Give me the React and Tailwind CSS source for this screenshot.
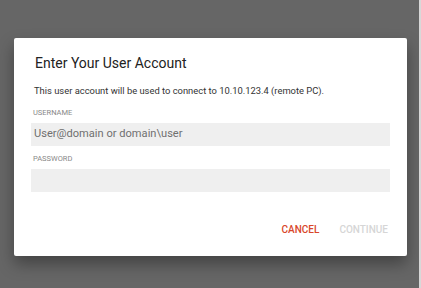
export default function App() {
  return (
    <div className="flex h-[288px] w-[421px] overflow-hidden bg-[#666666] font-['Roboto',sans-serif]">
      <div className="flex flex-1 items-start pl-[14px] pr-[12px] pt-[38px]">
        {/* Dialog */}
        <div className="w-full rounded-[2px] bg-white px-[17px] pb-[19px] pt-[16px] shadow-[0_8px_16px_rgba(0,0,0,0.35)]">
          <h2 className="pl-[4px] text-[14px] leading-[18px] text-[#222222]">Enter Your User Account</h2>
          <p className="mt-[12px] pl-[3px] text-[9.4px] leading-[13px] text-[#333333]">
            This user account will be used to connect to 10.10.123.4 (remote PC).
          </p>
          <label className="mt-[9.5px] block pl-[2px] text-[7.5px] leading-[12px] text-[#888888]">USERNAME</label>
          <div className="mt-[4.5px] flex h-[23px] items-center bg-[#efefef] px-[3px] text-[11.1px] text-[#707070]">
            User@domain or domain\user
          </div>
          <label className="mt-[7px] block pl-[2px] text-[7.5px] leading-[12px] text-[#888888]">PASSWORD</label>
          <div className="mt-[4px] h-[23px] bg-[#efefef]" />
          <div className="mt-[31px] flex justify-end gap-[20px] pr-[2px] text-[10px] font-medium leading-[14px]">
            <button type="button" className="text-[#d9472b]">CANCEL</button>
            <button type="button" className="text-[#d6d6d6]">CONTINUE</button>
          </div>
        </div>
      </div>
      <div className="w-[2px] bg-[#d8d8d8]" />
    </div>
  )
}
